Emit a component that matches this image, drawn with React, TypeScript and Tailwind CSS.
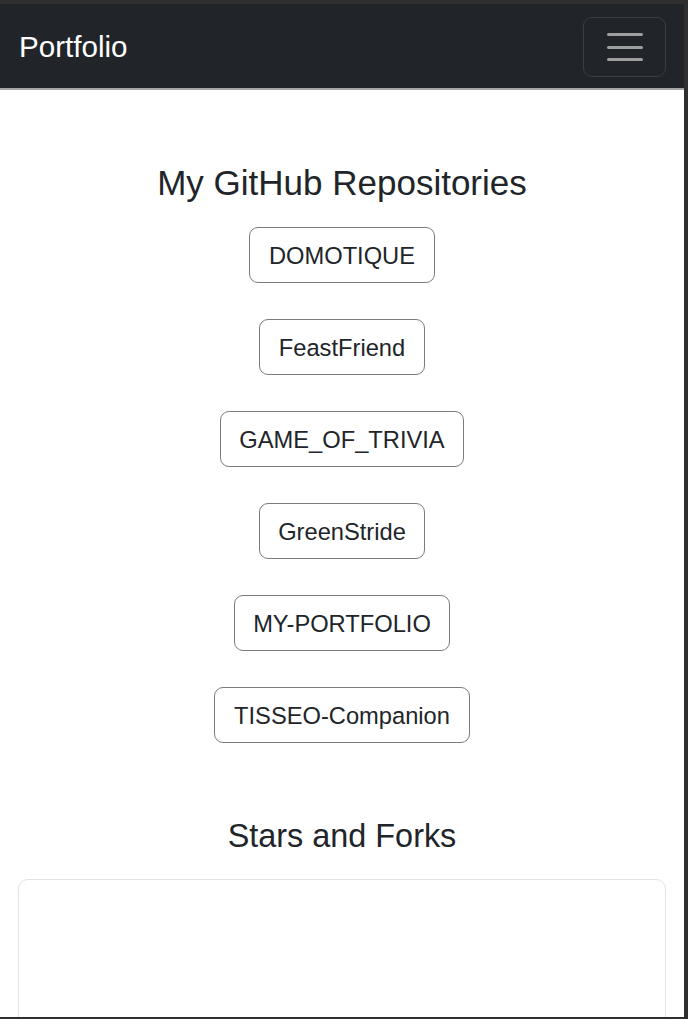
import React from 'react';

const repos = ['DOMOTIQUE', 'FeastFriend', 'GAME_OF_TRIVIA', 'GreenStride', 'MY-PORTFOLIO', 'TISSEO-Companion'];

const App: React.FC = () => {
  return (
    <div className="w-[688px] h-[1019px] bg-[#2f2f2f] pt-[4px] pr-[4px] pb-[2px] overflow-hidden font-['Liberation_Sans',Arial,sans-serif]">
      <div className="h-full bg-white overflow-hidden text-[#212529]">
        {/* Navbar */}
        <nav className="h-[86px] pt-[2px] bg-[#212529] border-b-2 border-[#a4a5a7] flex items-center justify-between pl-[19px] pr-[18px]">
          <span className="text-white text-[29.6px] leading-none">Portfolio</span>
          <button className="w-[83px] h-[60px] rounded-[9px] border-[1.5px] border-[#3a3d41] flex flex-col items-center justify-center gap-[9.5px]">
            <span className="block w-[36px] h-[3px] rounded-full bg-[#9c9ea0]"></span>
            <span className="block w-[36px] h-[3px] rounded-full bg-[#9c9ea0]"></span>
            <span className="block w-[36px] h-[3px] rounded-full bg-[#9c9ea0]"></span>
          </button>
        </nav>

        {/* Repositories */}
        <section className="pt-[72px] flex flex-col items-center">
          <h2 className="text-[35px] leading-[1.2]">My GitHub Repositories</h2>
          <div className="mt-[23px] flex flex-col items-center gap-[36px]">
            {repos.map((repo) => (
              <button
                key={repo}
                className="h-[56px] pt-[3px] border-[1.5px] border-[#7a7d80] rounded-[9px] px-[18.6px] text-[23.7px] leading-[35.5px] text-[#212529] bg-white"
              >
                {repo}
              </button>
            ))}
          </div>
        </section>

        {/* Stars and Forks */}
        <section className="mt-[74px] px-[18px]">
          <h3 className="text-center text-[32.4px] leading-[1.2]">Stars and Forks</h3>
          <div className="mt-[23px] h-[300px] border-[1.5px] border-[#e3e3e3] rounded-[10px] bg-white"></div>
        </section>
      </div>
    </div>
  );
};

export default App;
